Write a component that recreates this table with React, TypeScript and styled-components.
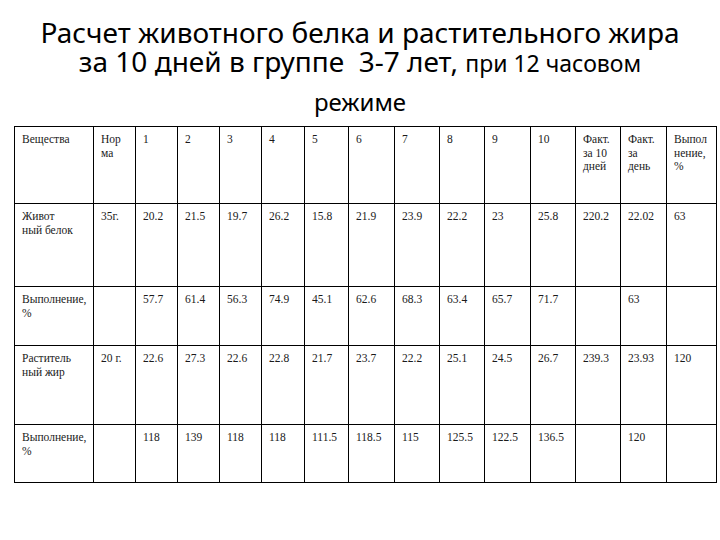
import React from "react";
import styled, { createGlobalStyle } from "styled-components";

const GlobalStyle = createGlobalStyle`
  html, body {
    margin: 0;
    padding: 0;
    background: #fff;
  }
`;

const columns = [79, 42, 42, 42, 42, 43, 44, 46, 45, 45, 46, 45, 45, 46, 50];

type Row = { height: number; accent?: boolean; cells: string[] };

const rows: Row[] = [
  {
    height: 77,
    cells: [
      "Вещества",
      "Нор\nма",
      "1",
      "2",
      "3",
      "4",
      "5",
      "6",
      "7",
      "8",
      "9",
      "10",
      "Факт.\nза 10\nдней",
      "Факт.\nза\nдень",
      "Выпол\nнение,\n%",
    ],
  },
  {
    height: 83,
    cells: ["Живот\nный белок", "35г.", "20.2", "21.5", "19.7", "26.2", "15.8", "21.9", "23.9", "22.2", "23", "25.8", "220.2", "22.02", "63"],
  },
  {
    height: 59,
    cells: ["Выполнение,\n%", "", "57.7", "61.4", "56.3", "74.9", "45.1", "62.6", "68.3", "63.4", "65.7", "71.7", "", "63", ""],
  },
  {
    height: 79,
    accent: true,
    cells: ["Раститель\nный жир", "20 г.", "22.6", "27.3", "22.6", "22.8", "21.7", "23.7", "22.2", "25.1", "24.5", "26.7", "239.3", "23.93", "120"],
  },
  {
    height: 58,
    cells: ["Выполнение,\n%", "", "118", "139", "118", "118", "111.5", "118.5", "115", "125.5", "122.5", "136.5", "", "120", ""],
  },
];

export default function App() {
  return (
    <>
      <GlobalStyle />
      <Page>
        <Heading>
          <TitleLine $size={28} $height={29}>
            Расчет животного белка и растительного жира
          </TitleLine>
          <TitleLine $size={28} $height={29}>
            за 10 дней в группе&nbsp; 3-7 лет, <Small>при 12 часовом</Small>
          </TitleLine>
          <TitleLine $size={24} $height={36} $offset={6}>
            режиме
          </TitleLine>
        </Heading>
        <Table>
          <colgroup>
            {columns.map((w, i) => (
              <col key={i} style={{ width: w }} />
            ))}
          </colgroup>
          <tbody>
            {rows.map((row, r) => (
              <TableRow key={r} $height={row.height} $accent={row.accent}>
                {row.cells.map((c, i) => (
                  <Cell key={i}>{c}</Cell>
                ))}
              </TableRow>
            ))}
          </tbody>
        </Table>
      </Page>
    </>
  );
}

const Page = styled.div`
  width: 720px;
  height: 540px;
  padding: 0 0 0 14px;
  box-sizing: border-box;
`;

const Heading = styled.div`
  width: 692px;
  height: 126px;
  padding-top: 18px;
  box-sizing: border-box;
  text-align: center;
  font-family: "Noto Sans", "Open Sans", sans-serif;
  color: #000;
`;

const TitleLine = styled.div<{ $size: number; $height: number; $offset?: number }>`
  font-size: ${(p) => p.$size}px;
  line-height: ${(p) => p.$height}px;
  margin-top: ${(p) => p.$offset ?? 0}px;
  white-space: pre;
`;

const Small = styled.span`
  font-size: 23px;
`;

const Table = styled.table`
  border-collapse: collapse;
  table-layout: fixed;
  width: 702px;
`;

const TableRow = styled.tr<{ $height: number; $accent?: boolean }>`
  height: ${(p) => p.$height}px;
  ${(p) => p.$accent && `& > td { border-top-color: #cf4b6a; }`}
`;

const Cell = styled.td`
  border: 1px solid #000;
  padding: 6px 3px 0 7px;
  vertical-align: top;
  font-family: "Liberation Serif", serif;
  font-size: 11.5px;
  font-weight: 400;
  line-height: 13.5px;
  color: #1a1a1a;
  white-space: pre-line;
  overflow: hidden;
`;
